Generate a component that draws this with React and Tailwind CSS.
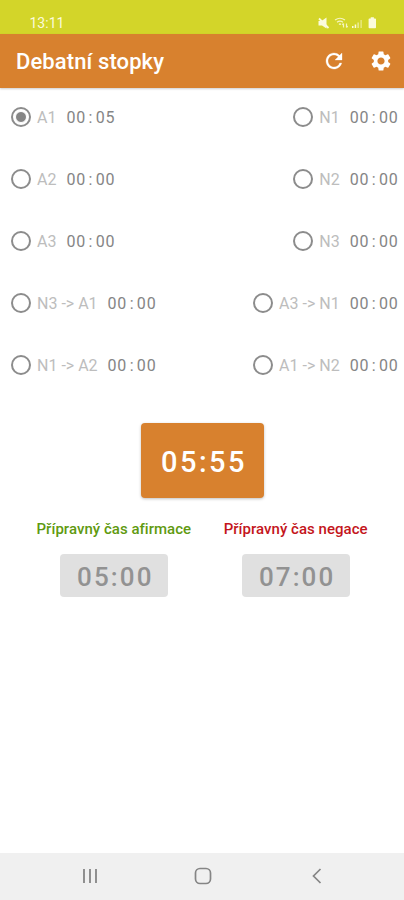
import React, { useState } from 'react'

const speeches = [
  { left: { id: 'A1', time: '00:05' }, right: { id: 'N1', time: '00:00' } },
  { left: { id: 'A2', time: '00:00' }, right: { id: 'N2', time: '00:00' } },
  { left: { id: 'A3', time: '00:00' }, right: { id: 'N3', time: '00:00' } },
  { left: { id: 'N3 -> A1', time: '00:00' }, right: { id: 'A3 -> N1', time: '00:00' } },
  { left: { id: 'N1 -> A2', time: '00:00' }, right: { id: 'A1 -> N2', time: '00:00' } }
]

// Fixed width time, the colon takes as much room as a digit
function RowTime({ value }) {
  const [min, sec] = value.split(':')
  return (
    <span className="flex pt-[2px] text-[16px] tracking-[0.8px] text-[#858585]">
      <span>{min}</span>
      <span className="w-[9.7px] text-center">:</span>
      <span>{sec}</span>
    </span>
  )
}

function SpeechOption({ item, checked, onSelect }) {
  return (
    <button role="radio" aria-checked={checked} onClick={onSelect} className="flex h-6 items-center">
      <span className="flex h-5 w-5 items-center justify-center rounded-full border-2 border-[#8c8c8c]">
        {checked && <span className="h-3 w-3 rounded-full border border-white bg-[#858585]"></span>}
      </span>
      <span className="ml-[6px] mr-[10px] pt-[2px] text-[16px] whitespace-pre text-[#bdbdbd]">{item.id}</span>
      <RowTime value={item.time} />
    </button>
  )
}

function StatusBar() {
  return (
    <div className="flex h-[34px] items-end justify-between bg-[#d3d529] pl-[29.5px] pr-[26px] pb-[3px] text-[#fbfbdc]">
      <span className="text-[14px] leading-[15px]">13:11</span>
      <svg width="61" height="14" viewBox="0 0 61 14" fill="currentColor" aria-hidden>
        {/* muted speaker */}
        <path d="M1.500 4h3l5-3.500v11L5 8.500H1.500z" />
        <path d="M2 1.500l9.500 9.500" stroke="currentColor" strokeWidth="1.800" />
        {/* wifi */}
        <g fill="none" stroke="currentColor" strokeWidth="1.200" opacity="0.85">
          <path d="M18 3q5-3.500 10 0" />
          <path d="M20 5.300q3-2.300 6 0" />
          <path d="M22 7.500q1-1 2 0" />
          <path d="M26.500 10.500v-4m-1.200 1.300l1.200-1.300M29.500 6.500v4m1.200-1.300l-1.200 1.300" />
        </g>
        {/* signal */}
        <path d="M35 9h1.500v2H35zM37.700 7.500h1.500V11h-1.500z" />
        <path d="M40.400 5.500h1.500V11h-1.500zM43.500 3h1.200v8h-1.200z" opacity="0.6" />
        {/* battery */}
        <path d="M53.700.3h3.200v1.200h1.300q.8 0 .8.800v8.200q0 .8-.8.800h-5.800q-.8 0-.8-.8V2.300q0-.8.8-.8h1.300z" />
      </svg>
    </div>
  )
}

function AppBar() {
  return (
    <header className="relative z-10 flex h-[54px] items-center bg-[#d8812e] pl-4 pr-[11px] text-white shadow-[0_1px_2px_rgba(0,0,0,0.2)]">
      <h1 className="flex-1 pt-px text-[22px] font-medium tracking-[0.1px]">Debatní stopky</h1>
      <button aria-label="Reset">
        <svg className="h-6 w-6" viewBox="0 0 24 24" fill="currentColor" aria-hidden>
          <path stroke="currentColor" strokeWidth="0.3" d="M17.65 6.35A7.958 7.958 0 0 0 12 4c-4.42 0-7.990 3.580-7.990 8s3.570 8 7.990 8c3.730 0 6.840-2.550 7.730-6h-2.080A5.990 5.990 0 0 1 12 18c-3.310 0-6-2.690-6-6s2.690-6 6-6c1.660 0 3.140.69 4.220 1.780L13 11h7V4l-2.350 2.350z" />
        </svg>
      </button>
      <button aria-label="Settings" className="ml-[23px]">
        <svg className="h-6 w-6" viewBox="0 0 24 24" fill="currentColor" aria-hidden>
          <path d="M19.14 12.94c.04-.3.06-.61.06-.94 0-.32-.02-.64-.07-.94l2.030-1.580a.49.49 0 0 0 .12-.61l-1.920-3.320a.488.488 0 0 0-.59-.22l-2.390.96c-.5-.38-1.030-.7-1.620-.94l-.36-2.540a.484.484 0 0 0-.48-.41h-3.840c-.24 0-.43.17-.47.41l-.36 2.540c-.59.24-1.130.57-1.620.94l-2.390-.96c-.22-.08-.47 0-.59.22L2.740 8.870c-.12.21-.08.47.12.61l2.030 1.580c-.05.3-.09.63-.09.94s.02.64.07.94l-2.030 1.580a.49.49 0 0 0-.12.61l1.920 3.320c.12.22.37.29.59.22l2.390-.96c.5.38 1.030.7 1.620.94l.36 2.540c.05.24.24.41.48.41h3.840c.24 0 .44-.17.47-.41l.36-2.540c.59-.24 1.130-.56 1.620-.94l2.390.96c.22.08.47 0 .59-.22l1.920-3.320c.12-.22.07-.47-.12-.61l-2.010-1.580zM12 15.600c-1.980 0-3.600-1.620-3.600-3.600s1.620-3.600 3.600-3.600 3.600 1.620 3.600 3.600-1.620 3.600-3.600 3.600z" />
        </svg>
      </button>
    </header>
  )
}

function PrepTimer({ label, time, color }) {
  return (
    <div className="flex flex-col items-center">
      <span className={`text-[15px] leading-5 font-medium whitespace-nowrap tracking-[0.03px] ${color}`}>{label}</span>
      <button className="mt-[15px] h-[43px] w-[108px] rounded-[4px] bg-[#e0e0e0] pt-[3px] pl-[3px] text-[26px] font-medium tracking-[2.1px] text-[#929292]">
        {time}
      </button>
    </div>
  )
}

function NavBar() {
  return (
    <nav className="flex h-[47px] items-center justify-between bg-[#f0f0f0] pl-[82px] pr-[78px] pb-px text-[#858585]">
      <svg width="16" height="16" viewBox="0 0 16 16" stroke="currentColor" strokeWidth="1.8" aria-hidden>
        <path d="M2 1v14M8 1v14M14 1v14" />
      </svg>
      <svg width="18" height="18" viewBox="0 0 18 18" fill="none" stroke="currentColor" strokeWidth="1.7" aria-hidden>
        <rect x="1.5" y="1.5" width="15" height="15" rx="4.500" />
      </svg>
      <svg width="18" height="18" viewBox="0 0 18 18" fill="none" stroke="currentColor" strokeWidth="1.700" aria-hidden>
        <path d="M12.500 2L5.500 9l7 7" />
      </svg>
    </nav>
  )
}

export default function App() {
  const [active, setActive] = useState('A1')

  return (
    <div className="flex h-screen w-full flex-col overflow-hidden bg-white font-['Roboto',sans-serif]">
      <StatusBar />
      <AppBar />

      <main className="flex flex-1 flex-col">
        <div role="radiogroup" className="mt-[17px] flex flex-col gap-[38px] pl-[11px] pr-[5.5px]">
          {speeches.map(({ left, right }) => (
            <div key={left.id} className="flex justify-between">
              <SpeechOption item={left} checked={active === left.id} onSelect={() => setActive(left.id)} />
              <SpeechOption item={right} checked={active === right.id} onSelect={() => setActive(right.id)} />
            </div>
          ))}
        </div>

        <button className="mt-[46px] ml-[141px] h-[75px] w-[123px] rounded-[4px] bg-[#d8812e] pt-[5px] pl-[3px] text-[29px] font-medium tracking-[2.500px] text-white shadow-[0_1px_3px_rgba(0,0,0,0.25)]">
          05:55
        </button>

        <div className="mt-[21px] flex gap-[32.5px] pl-[36.5px]">
          <PrepTimer label="Přípravný čas afirmace" time="05:00" color="text-[#5f9a10]" />
          <PrepTimer label="Přípravný čas negace" time="07:00" color="text-[#c4161c]" />
        </div>
      </main>

      <NavBar />
    </div>
  )
}
